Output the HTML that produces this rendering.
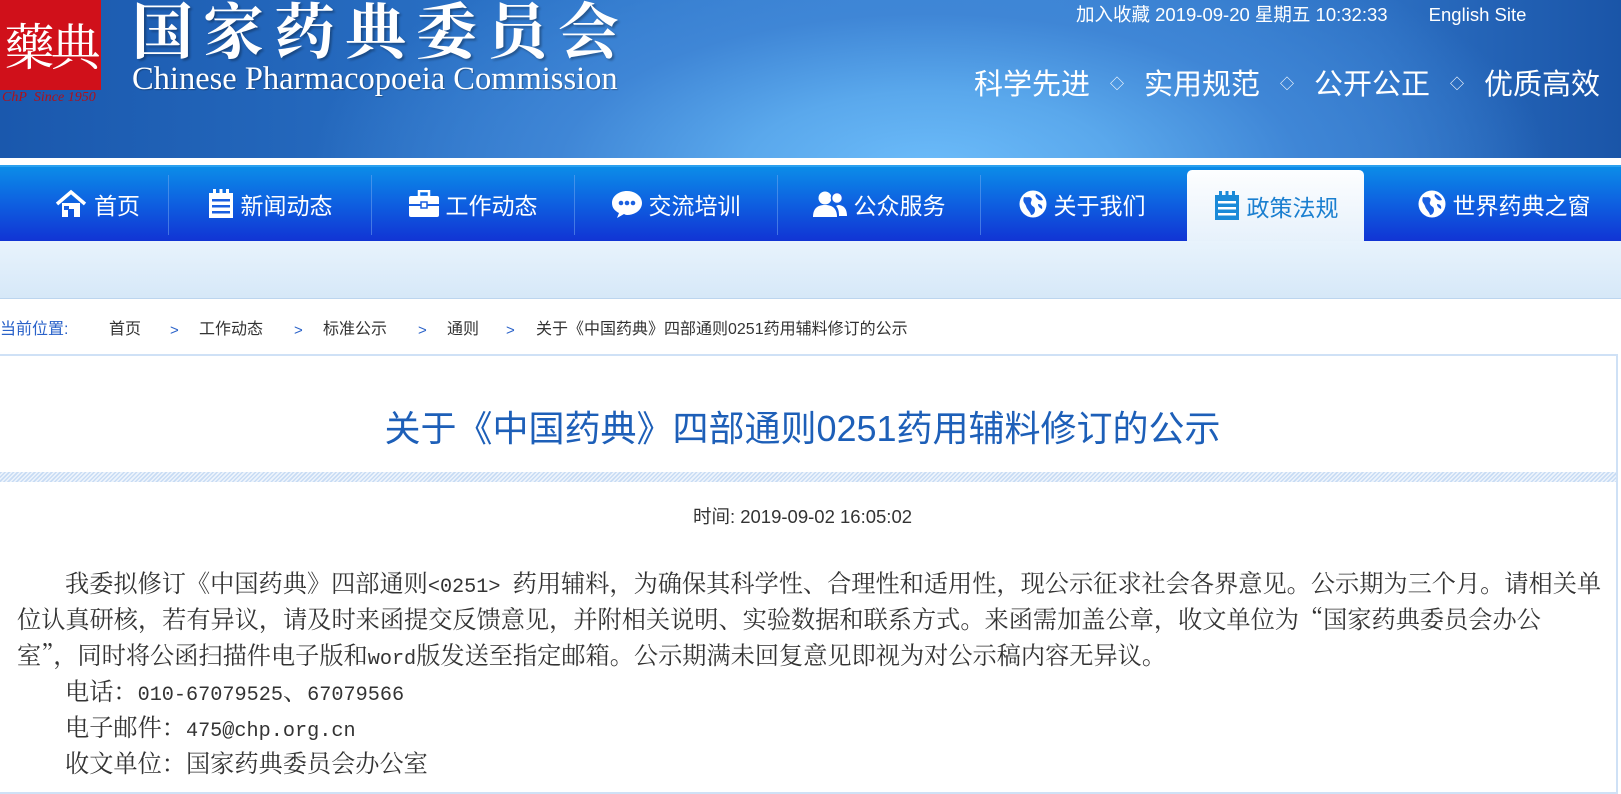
<!DOCTYPE html>
<html><head><meta charset="utf-8">
<style>
*{margin:0;padding:0;box-sizing:border-box}
body{width:1621px;height:781px;overflow:hidden;background:#fff;font-family:"Liberation Sans","Noto Sans CJK SC",sans-serif;position:relative}
.hdr{position:absolute;left:0;top:0;width:1621px;height:158px;background:radial-gradient(ellipse 620px 260px at 930px 170px,#6cbcfa 0%,#5aa8ec 30%,#3f86d6 60%,rgba(40,110,200,0) 100%),linear-gradient(90deg,#1a58ad 0%,#2c74c8 35%,#3c88d8 60%,#2c6fc2 85%,#1a55a8 100%);}
.logo{position:absolute;left:0;top:0;width:101px;height:90px;background:#d0101a;color:#fff;font-family:"Noto Serif CJK SC",serif;font-size:50px;line-height:88px;text-align:center;letter-spacing:-4px;overflow:hidden}
.since{position:absolute;left:2px;top:90px;color:#b01018;font-family:"Liberation Serif",serif;font-style:italic;font-size:14px;white-space:nowrap}
.cn{position:absolute;left:132px;top:-16px;color:#fff;font-family:"Noto Serif CJK SC",serif;font-weight:700;font-size:61px;letter-spacing:10px;text-shadow:2px 2px 2px rgba(0,0,0,.3);white-space:nowrap}
.en{position:absolute;left:132px;top:61px;color:#fff;font-family:"Liberation Serif",serif;font-size:32.5px;white-space:nowrap;text-shadow:1px 1px 1px rgba(0,0,0,.3)}
.top{position:absolute;left:1076px;top:1px;color:#fff;font-size:18.5px;white-space:nowrap}
.slog{position:absolute;left:974px;top:61px;color:#fff;font-size:29px;white-space:nowrap}
.slog i{font-style:normal;font-size:14px;margin:0 20px;vertical-align:5px}
.nav{position:absolute;left:0;top:165px;width:1621px;height:76px;background:linear-gradient(#0b8ce8,#0e5fe0 50%,#1134d4);border-top:2px solid #2aa0ee}
.ni{position:absolute;top:0;height:74px;color:#fff;font-size:23px;display:flex;align-items:center;justify-content:center;gap:6px;white-space:nowrap}
.dv{position:absolute;top:8px;width:1px;height:60px;background:rgba(120,170,240,.5)}
.act{background:linear-gradient(#fdfeff,#e6f1fb);border-radius:5px 5px 0 0;top:3px;height:72px;color:#1a7fd0}
.band{position:absolute;left:0;top:241px;width:1621px;height:58px;background:linear-gradient(#e8f3fc,#d6e8f8);border-bottom:1px solid #bcd5ee}
.bc{position:absolute;top:320px;font-size:16px;color:#333;white-space:nowrap;line-height:20px}
.bc.b{color:#2a62c9}
.bc.g{top:321px;font-size:15px}
.box{position:absolute;left:-3px;top:354px;width:1621px;height:440px;border:2px solid #cfe1f6}
.title{position:absolute;left:0;width:1605px;top:400px;text-align:center;color:#1d5fb8;font-size:36px;white-space:nowrap}
.hatch{position:absolute;left:0;top:472px;width:1616px;height:10px;background:repeating-linear-gradient(135deg,#c8dcf4 0 1.5px,#eef4fc 1.5px 3px)}
.time{position:absolute;left:0;width:1605px;top:503px;text-align:center;color:#333;font-size:18.5px}
.p{position:absolute;left:17px;color:#333;font-family:"Noto Serif CJK SC","Liberation Serif",serif;font-size:24.2px;white-space:nowrap;line-height:36px}
.m{font-family:"Liberation Mono",monospace;font-size:20.2px}
</style></head><body>
<div class="hdr">
 <div class="logo">藥典</div>
 <div class="since">ChP&nbsp; Since 1950</div>
 <div class="cn">国家药典委员会</div>
 <div class="en">Chinese Pharmacopoeia Commission</div>
 <div class="top">加入收藏 2019-09-20 星期五 10:32:33&nbsp;&nbsp;&nbsp;&nbsp;&nbsp;&nbsp;&nbsp;&nbsp;English Site</div>
 <div class="slog">科学先进<i>◇</i>实用规范<i>◇</i>公开公正<i>◇</i>优质高效</div>
</div>
<div class="nav">
 <div class="ni" style="left:40px;width:128px;justify-content:flex-start;padding-left:14px"><svg width="34" height="30" viewBox="0 0 32 30"><path d="M2 15 L16 3 L30 15" fill="none" stroke="#fff" stroke-width="3.5"/><path d="M7 14 V28 H13 V20 H19 V28 H25 V14" fill="#fff"/><rect x="9" y="17" width="5" height="4" fill="#1a5fe0"/></svg>首页</div>
 <div class="dv" style="left:168px"></div>
 <div class="ni" style="left:168px;width:203px"><svg width="28" height="30" viewBox="0 0 28 30"><rect x="2" y="4" width="24" height="25" fill="#fff"/><g fill="#1a5fe0"><rect x="5" y="10" width="18" height="2.5"/><rect x="5" y="16" width="18" height="2.5"/><rect x="5" y="22" width="18" height="2.5"/></g><g fill="#fff"><rect x="6" y="0" width="3" height="6"/><rect x="12.5" y="0" width="3" height="6"/><rect x="19" y="0" width="3" height="6"/></g></svg>新闻动态</div>
 <div class="dv" style="left:371px"></div>
 <div class="ni" style="left:371px;width:203px"><svg width="32" height="28" viewBox="0 0 32 28"><rect x="11" y="1" width="10" height="6" fill="none" stroke="#fff" stroke-width="2.5"/><rect x="1" y="6" width="30" height="21" rx="2" fill="#fff"/><rect x="1" y="14" width="30" height="2" fill="#1a5fe0"/><rect x="13" y="12" width="6" height="6" fill="#fff" stroke="#1a5fe0" stroke-width="1.5"/></svg>工作动态</div>
 <div class="dv" style="left:574px"></div>
 <div class="ni" style="left:574px;width:203px"><svg width="32" height="30" viewBox="0 0 32 30"><path d="M16 2 C8 2 1 7 1 14 C1 19 4 22 8 24 L6 29 L13 25 C14 25.5 15 26 16 26 C24 26 31 21 31 14 C31 7 24 2 16 2Z" fill="#fff"/><circle cx="10" cy="14" r="2.3" fill="#1a5fe0"/><circle cx="16" cy="14" r="2.3" fill="#1a5fe0"/><circle cx="22" cy="14" r="2.3" fill="#1a5fe0"/></svg>交流培训</div>
 <div class="dv" style="left:777px"></div>
 <div class="ni" style="left:777px;width:203px"><svg width="36" height="28" viewBox="0 0 36 28"><circle cx="13" cy="8" r="6.5" fill="#fff"/><path d="M1 27 C1 18 6 15 13 15 C20 15 25 18 25 27Z" fill="#fff"/><circle cx="25" cy="8" r="5.5" fill="#fff" stroke="#1a5fe0" stroke-width="1.5"/><path d="M26 15 C31 15 35 18 35 26 H27 C27 21 26 18 24 16Z" fill="#fff"/></svg>公众服务</div>
 <div class="dv" style="left:980px"></div>
 <div class="ni" style="left:980px;width:203px"><svg width="30" height="30" viewBox="0 0 30 30"><circle cx="15" cy="15" r="13.5" fill="#fff"/><path d="M6 8 C9 9 11 7 13 9 C15 11 12 13 13 15 C14 18 17 17 17 21 C17 24 15 26 13 26 C12 22 9 21 8 17 C7 14 4 13 6 8Z M18 5 C21 6 24 8 25 11 C23 12 20 11 19 9 C18 8 17 7 18 5Z M20 15 C23 15 25 17 24 20 C22 19 20 18 20 15Z" fill="#1a5fe0"/></svg>关于我们</div>
 <div class="ni act" style="left:1187px;width:177px"><svg width="28" height="30" viewBox="0 0 28 30"><rect x="2" y="4" width="24" height="25" fill="#1a8ad8"/><g fill="#fff"><rect x="5" y="10" width="18" height="2.5"/><rect x="5" y="16" width="18" height="2.5"/><rect x="5" y="22" width="18" height="2.5"/></g><g fill="#1a8ad8"><rect x="6" y="0" width="3" height="6"/><rect x="12.5" y="0" width="3" height="6"/><rect x="19" y="0" width="3" height="6"/></g></svg>政策法规</div>
 <div class="ni" style="left:1386px;width:235px"><svg width="30" height="30" viewBox="0 0 30 30"><circle cx="15" cy="15" r="13.5" fill="#fff"/><path d="M6 8 C9 9 11 7 13 9 C15 11 12 13 13 15 C14 18 17 17 17 21 C17 24 15 26 13 26 C12 22 9 21 8 17 C7 14 4 13 6 8Z M18 5 C21 6 24 8 25 11 C23 12 20 11 19 9 C18 8 17 7 18 5Z M20 15 C23 15 25 17 24 20 C22 19 20 18 20 15Z" fill="#1a5fe0"/></svg>世界药典之窗</div>
</div>
<div class="band"></div>
<div class="bc b" style="left:0">当前位置:</div>
<div class="bc" style="left:109px">首页</div>
<div class="bc b g" style="left:170px">&gt;</div>
<div class="bc" style="left:199px">工作动态</div>
<div class="bc b g" style="left:294px">&gt;</div>
<div class="bc" style="left:323px">标准公示</div>
<div class="bc b g" style="left:418px">&gt;</div>
<div class="bc" style="left:447px">通则</div>
<div class="bc b g" style="left:506px">&gt;</div>
<div class="bc" style="left:536px">关于《中国药典》四部通则0251药用辅料修订的公示</div>
<div class="box"></div>
<div class="title">关于《中国药典》四部通则0251药用辅料修订的公示</div>
<div class="hatch"></div>
<div class="time">时间: 2019-09-02 16:05:02</div>
<div class="p" style="top:564px;left:65px">我委拟修订《中国药典》四部通则<span class="m">&lt;0251&gt; </span>药用辅料，为确保其科学性、合理性和适用性，现公示征求社会各界意见。公示期为三个月。请相关单</div>
<div class="p" style="top:600px">位认真研核，若有异议，请及时来函提交反馈意见，并附相关说明、实验数据和联系方式。来函需加盖公章，收文单位为“国家药典委员会办公</div>
<div class="p" style="top:636px">室”，同时将公函扫描件电子版和<span class="m">word</span>版发送至指定邮箱。公示期满未回复意见即视为对公示稿内容无异议。</div>
<div class="p" style="top:672px;left:65px">电话：<span class="m">010-67079525</span>、<span class="m">67079566</span></div>
<div class="p" style="top:708px;left:65px">电子邮件：<span class="m">475@chp.org.cn</span></div>
<div class="p" style="top:744px;left:65px">收文单位：国家药典委员会办公室</div>
</body></html>
